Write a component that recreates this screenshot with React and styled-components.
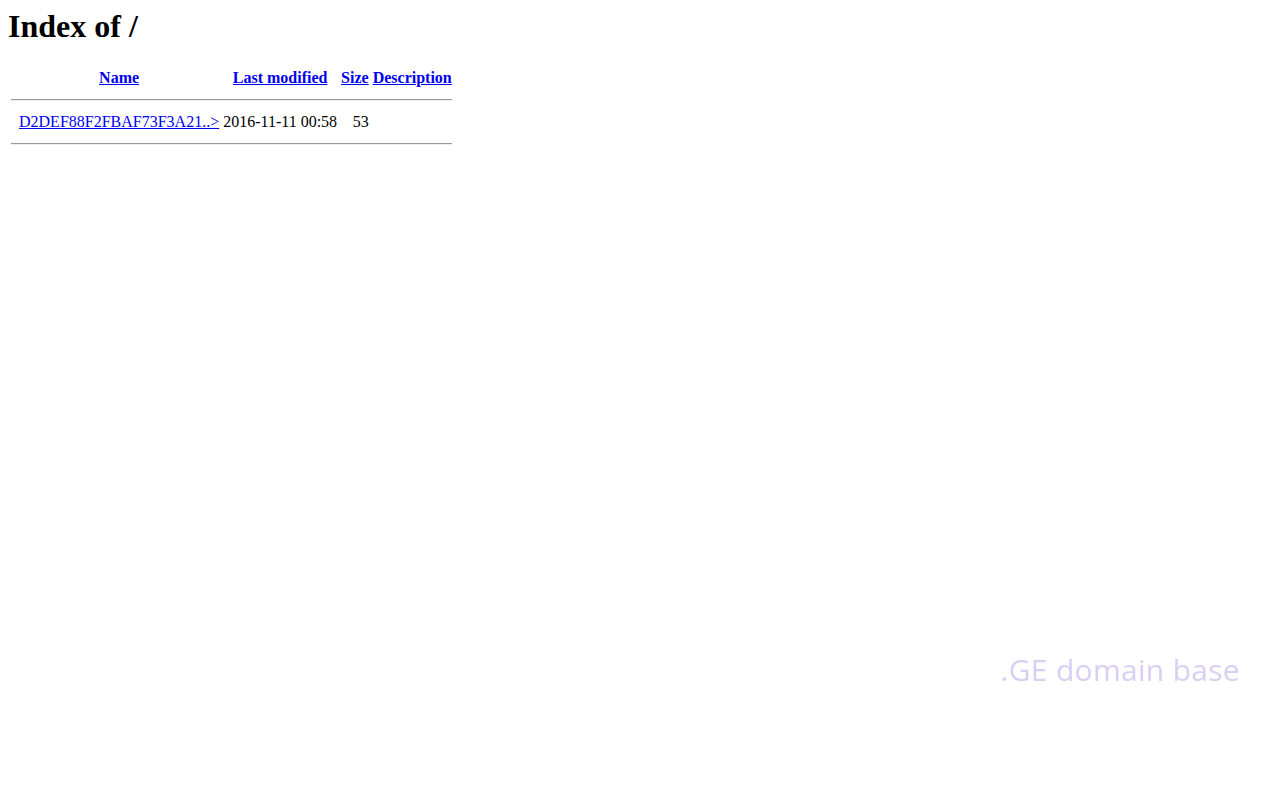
import React from 'react';
import styled, { createGlobalStyle } from 'styled-components';

const GlobalStyle = createGlobalStyle`
  html, body {
    background: #fff;
  }
  body {
    margin: 8px;
    font-family: "Liberation Serif", "Times New Roman", serif;
    font-size: 16px;
    color: #000;
  }
`;

const Title = styled.h1`
  font-size: 32px;
  font-weight: bold;
  margin: 0 0 21px;
  line-height: 37px;
`;

const Listing = styled.table`
  border-collapse: separate;
  border-spacing: 2px;
`;

const Head = styled.th`
  padding: 1px;
  text-align: center;
  font-weight: bold;
  vertical-align: middle;
`;

const Cell = styled.td`
  padding: 1px;
  text-align: ${(p) => (p.$right ? 'right' : 'left')};
  white-space: nowrap;
`;

const IconCell = styled.td`
  padding: 1px;
  width: 4px;
`;

const Link = styled.a`
  color: #0000ee;
  text-decoration: underline;
`;

const Rule = styled.hr`
  margin: 8px 0;
  border: 0;
  border-top: 1px solid #9a9a9a;
  border-bottom: 1px solid #eee;
  height: 0;
`;

const Watermark = styled.div`
  position: fixed;
  right: 40px;
  top: 649px;
  font-family: "Open Sans", "Noto Sans", sans-serif;
  font-size: 30px;
  color: #d9cff3;
  letter-spacing: 0.3px;
`;

const files = [
  { name: 'D2DEF88F2FBAF73F3A21..>', modified: '2016-11-11 00:58', size: '53', desc: '' },
];

export default function App() {
  return (
    <>
      <GlobalStyle />
      <Title>Index of /</Title>
      <Listing>
        <tbody>
          <tr>
            <Head />
            <Head><Link href="#">Name</Link></Head>
            <Head><Link href="#">Last modified</Link></Head>
            <Head><Link href="#">Size</Link></Head>
            <Head><Link href="#">Description</Link></Head>
          </tr>
          <tr>
            <Head colSpan={5}><Rule /></Head>
          </tr>
          {files.map((f) => (
            <tr key={f.name}>
              <IconCell />
              <Cell><Link href="#">{f.name}</Link></Cell>
              <Cell $right>{f.modified}</Cell>
              <Cell $right>{f.size}</Cell>
              <Cell>{f.desc || '\u00a0'}</Cell>
            </tr>
          ))}
          <tr>
            <Head colSpan={5}><Rule /></Head>
          </tr>
        </tbody>
      </Listing>
      <Watermark>.GE domain base</Watermark>
    </>
  );
}
